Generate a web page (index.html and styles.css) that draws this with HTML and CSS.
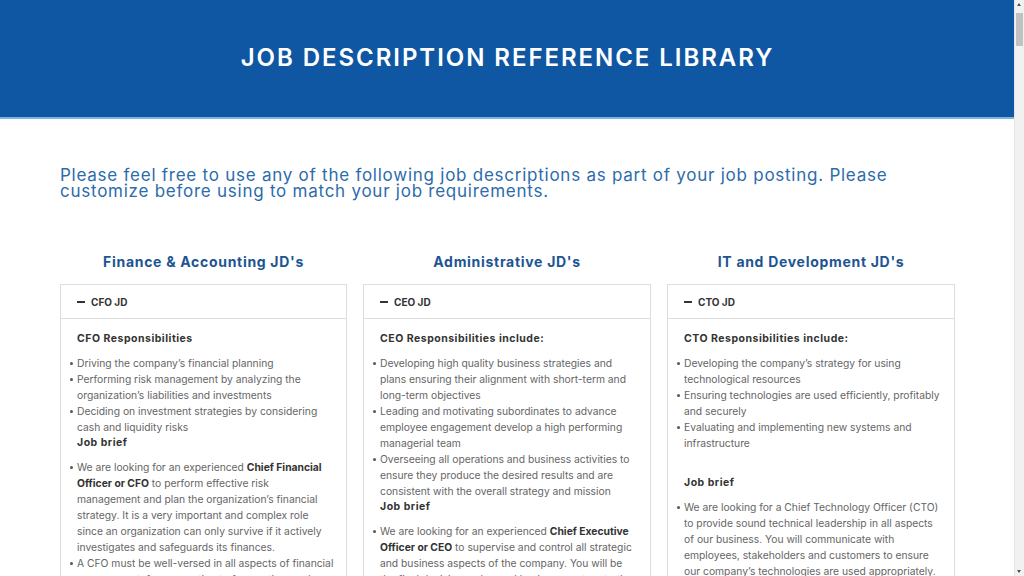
FILE: index.html
```html
<!DOCTYPE html>
<html lang="en">
<head>
<meta charset="utf-8">
<title>Job Description Reference Library</title>
<link rel="stylesheet" href="styles.css">
</head>
<body>
<header class="hero">
  <h1 class="hero-title">JOB DESCRIPTION REFERENCE LIBRARY</h1>
</header>
<main class="content">
  <p class="intro">Please feel free to use any of the following job descriptions as part of your job posting. Please customize before using to match your job requirements.</p>
  <div class="columns">
    <section class="col">
      <h2 class="col-title">Finance &amp; Accounting JD's</h2>
      <div class="acc">
        <div class="acc-head"><span class="minus"></span>CFO JD</div>
        <div class="acc-body">
          <h3 class="sub">CFO Responsibilities</h3>
          <ul class="list">
            <li>Driving the company’s financial planning</li>
            <li>Performing risk management by analyzing the organization’s liabilities and investments</li>
            <li>Deciding on investment strategies by considering cash and liquidity risks</li>
          </ul>
          <h3 class="sub">Job brief</h3>
          <ul class="list">
            <li>We are looking for an experienced <b>Chief Financial Officer or CFO</b> to perform effective risk management and plan the organization’s financial strategy. It is a very important and complex role since an organization can only survive if it actively investigates and safeguards its finances.</li>
            <li>A CFO must be well-versed in all aspects of financial management, from reporting to forecasting, and a strategic thinker.</li>
          </ul>
        </div>
      </div>
    </section>
    <section class="col">
      <h2 class="col-title">Administrative JD's</h2>
      <div class="acc">
        <div class="acc-head"><span class="minus"></span>CEO JD</div>
        <div class="acc-body">
          <h3 class="sub">CEO Responsibilities include:</h3>
          <ul class="list">
            <li>Developing high quality business strategies and plans ensuring their alignment with short-term and long-term objectives</li>
            <li>Leading and motivating subordinates to advance employee engagement develop a high performing managerial team</li>
            <li>Overseeing all operations and business activities to ensure they produce the desired results and are consistent with the overall strategy and mission</li>
          </ul>
          <h3 class="sub">Job brief</h3>
          <ul class="list">
            <li>We are looking for an experienced <b>Chief Executive Officer or CEO</b> to supervise and control all strategic and business aspects of the company. You will be the final decision maker and business partner to the board.</li>
          </ul>
        </div>
      </div>
    </section>
    <section class="col">
      <h2 class="col-title">IT and Development JD's</h2>
      <div class="acc">
        <div class="acc-head"><span class="minus"></span>CTO JD</div>
        <div class="acc-body">
          <h3 class="sub">CTO Responsibilities include:</h3>
          <ul class="list">
            <li>Developing the company’s strategy for using technological resources</li>
            <li>Ensuring technologies are used efficiently, profitably and securely</li>
            <li>Evaluating and implementing new systems and infrastructure</li>
          </ul>
          <h3 class="sub sub-gap">Job brief</h3>
          <ul class="list">
            <li>We are looking for a Chief Technology Officer (CTO) to provide sound technical leadership in all aspects of our business. You will communicate with employees, stakeholders and customers to ensure our company’s technologies are used appropriately.</li>
          </ul>
        </div>
      </div>
    </section>
  </div>
</main>
<div class="scrollbar" aria-hidden="true">
  <span class="sb-arrow sb-up"></span>
  <span class="sb-thumb"></span>
  <span class="sb-arrow sb-down"></span>
</div>
</body>
</html>
```

FILE: styles.css
```css
html, body {
  margin: 0;
  padding: 0;
}
body {
  font-family: "Inter", "DejaVu Sans", sans-serif;
  background: #ffffff;
  color: #666666;
  margin-right: 9px;
}
.hero {
  background: #0f57a2;
  height: 117px;
  border-bottom: 2px solid #7fb3e0;
  display: flex;
  align-items: center;
  justify-content: center;
}
.hero-title {
  margin: 0;
  color: #ffffff;
  font-size: 24px;
  font-weight: 600;
  letter-spacing: 1.95px;
  padding-bottom: 2px;
}
.content {
  padding: 48px 40px 40px 60px;
}
.intro {
  margin: 0;
  color: #2c6cab;
  font-size: 17px;
  line-height: 16px;
  letter-spacing: 0.75px;
  max-width: 880px;
}
.columns {
  display: grid;
  grid-template-columns: 287px 288px 288px;
  column-gap: 16px;
  margin-top: 54px;
}
.col-title {
  margin: 0 0 13px;
  text-align: center;
  color: #1d5592;
  font-size: 14px;
  font-weight: 700;
  letter-spacing: 0.7px;
  line-height: 18px;
}
.acc {
  border: 1px solid #dddddd;
}
.acc-head {
  height: 33px;
  border-bottom: 1px solid #dddddd;
  display: flex;
  align-items: center;
  padding-left: 16px;
  font-size: 10px;
  font-weight: 700;
  color: #333333;
}
.minus {
  width: 8px;
  height: 2px;
  background: #333333;
  margin-right: 6px;
}
.acc-body {
  padding: 12px 12px 20px 16px;
}
.sub {
  margin: 0 0 8px;
  font-size: 10.5px;
  font-weight: 700;
  letter-spacing: 0.5px;
  color: #333333;
  line-height: 16px;
}
.sub-gap {
  margin-top: 24px;
}
.list {
  margin: 0;
  padding-left: 0;
  list-style: none;
  font-size: 10.3px;
  line-height: 16px;
  color: #666666;
}
.list li {
  position: relative;
}
.list li::before {
  content: "";
  position: absolute;
  left: -7px;
  top: 7px;
  width: 3px;
  height: 3px;
  border-radius: 50%;
  background: #555555;
}
.list b {
  color: #333333;
  font-weight: 700;
}
.scrollbar {
  position: fixed;
  top: 0;
  right: 0;
  width: 9px;
  height: 100%;
  background: #f1f1f1;
  border-left: 1px solid #e6e6e6;
}
.sb-thumb {
  position: absolute;
  left: 1px;
  top: 13px;
  width: 7px;
  height: 33px;
  background: #c1c1c1;
}
.sb-arrow {
  position: absolute;
  left: 2px;
  width: 0;
  height: 0;
  border-left: 2.5px solid transparent;
  border-right: 2.5px solid transparent;
}
.sb-up {
  top: 3px;
  border-bottom: 3px solid #505050;
}
.sb-down {
  bottom: 3px;
  border-top: 3px solid #505050;
}
```
